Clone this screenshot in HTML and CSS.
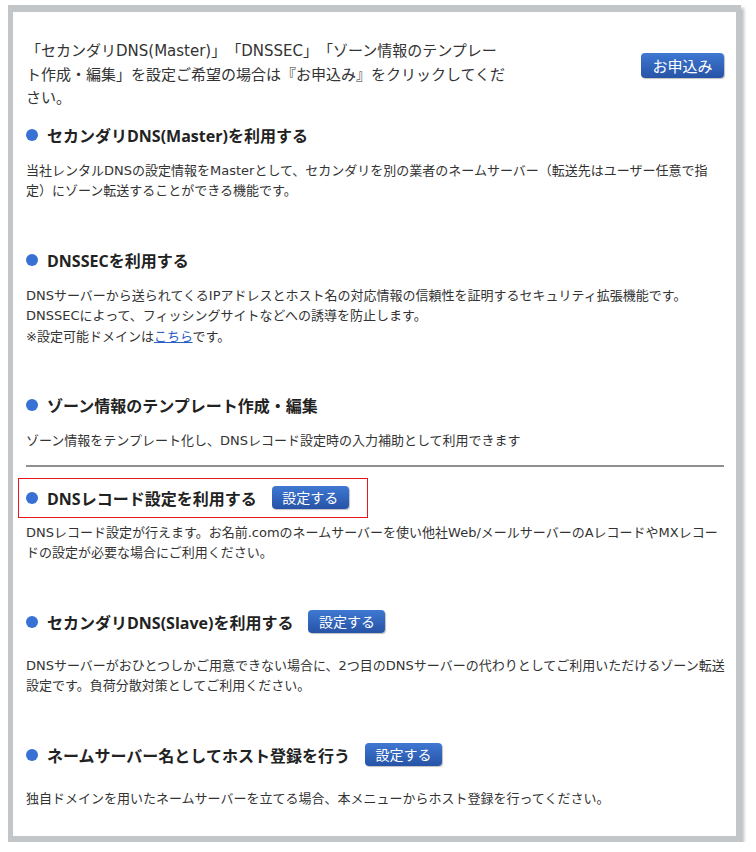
FILE: index.html
```html
<!DOCTYPE html>
<html lang="ja">
<head>
    <meta charset="UTF-8">
    <meta name="viewport" content="width=device-width, initial-scale=1.0">
    <link rel="stylesheet" href="styles.css">
    <title>DNS関連機能設定</title>
</head>
<body>
    <div class="frame">

        <div class="intro">
            <p class="intro-text">「セカンダリDNS(Master)」「DNSSEC」「ゾーン情報のテンプレー<br>ト作成・編集」を設定ご希望の場合は『お申込み』をクリックしてください。</p>
            <a href="#" class="btn btn-apply">お申込み</a>
        </div>

        <div class="section">
            <h2 class="section-title"><span class="dot"></span>セカンダリDNS(Master)を利用する</h2>
            <p class="section-text">当社レンタルDNSの設定情報をMasterとして、セカンダリを別の業者のネームサーバー（転送先はユーザー任意で指定）にゾーン転送することができる機能です。</p>
        </div>

        <div class="section">
            <h2 class="section-title"><span class="dot"></span>DNSSECを利用する</h2>
            <p class="section-text">DNSサーバーから送られてくるIPアドレスとホスト名の対応情報の信頼性を証明するセキュリティ拡張機能です。<br>DNSSECによって、フィッシングサイトなどへの誘導を防止します。<br>※設定可能ドメインは<a href="#" class="link">こちら</a>です。</p>
        </div>

        <div class="section section-last">
            <h2 class="section-title"><span class="dot"></span>ゾーン情報のテンプレート作成・編集</h2>
            <p class="section-text">ゾーン情報をテンプレート化し、DNSレコード設定時の入力補助として利用できます</p>
        </div>

        <hr class="divider">

        <div class="section">
            <h2 class="section-title marked"><span class="dot"></span>DNSレコード設定を利用する<a href="#" class="btn">設定する</a></h2>
            <p class="section-text">DNSレコード設定が行えます。お名前.comのネームサーバーを使い他社Web/メールサーバーのAレコードやMXレコードの設定が必要な場合にご利用ください。</p>
        </div>

        <div class="section">
            <h2 class="section-title has-btn"><span class="dot"></span>セカンダリDNS(Slave)を利用する<a href="#" class="btn">設定する</a></h2>
            <p class="section-text">DNSサーバーがおひとつしかご用意できない場合に、2つ目のDNSサーバーの代わりとしてご利用いただけるゾーン転送設定です。負荷分散対策としてご利用ください。</p>
        </div>

        <div class="section section-end">
            <h2 class="section-title has-btn"><span class="dot"></span>ネームサーバー名としてホスト登録を行う<a href="#" class="btn">設定する</a></h2>
            <p class="section-text">独自ドメインを用いたネームサーバーを立てる場合、本メニューからホスト登録を行ってください。</p>
        </div>

    </div>
</body>
</html>
```

FILE: styles.css
```css
*{
    box-sizing: border-box;
}

body{
    margin: 0;
    background-color: #fff;
    font-family: "Open Sans", "Noto Sans CJK JP", sans-serif;
    color: #333;
    text-spacing-trim: space-all;
}

.frame{
    width: 733px;
    margin: 5px 0 0 8px;
    padding: 28px 12px 27px 13px;
    background-color: #fff;
    border: 5px solid #c3c6c9;
    border-top-width: 7px;
    border-bottom-width: 6px;
    box-shadow: 3px 3px 3px rgba(0, 0, 0, 0.25);
}

.intro{
    display: flex;
    justify-content: space-between;
    align-items: flex-start;
    margin-bottom: 12px;
}

.intro-text{
    width: 492px;
    margin: 0;
    font-size: 15px;
    line-height: 23.5px;
    font-family: "DejaVu Sans", "Noto Sans CJK JP", sans-serif;
    color: #333;
}

.btn{
    display: inline-block;
    width: 77px;
    height: 23px;
    line-height: 23px;
    text-align: center;
    font-family: "Noto Sans CJK JP", sans-serif;
    font-size: 14px;
    font-weight: normal;
    color: #fff;
    text-decoration: none;
    border-radius: 4px;
    background: linear-gradient(#3f78d2, #2653a6);
    box-shadow: 1px 1px 1px rgba(0, 0, 0, 0.25);
}

.btn-apply{
    width: 83px;
    height: 25px;
    line-height: 25px;
    font-size: 15px;
    margin-top: 13px;
}

.section{
    padding-bottom: 46px;
}

.section-last{
    padding-bottom: 13px;
}

.section-end{
    padding-bottom: 0;
}

.section-title{
    display: flex;
    align-items: center;
    height: 24px;
    margin: 0 0 14px;
    font-size: 16px;
    font-weight: bold;
    color: #222;
}

.section-title .btn{
    margin-left: 15px;
}

.has-btn{
    margin-bottom: 22px;
}

.dot{
    width: 12px;
    height: 12px;
    margin-right: 9px;
    border-radius: 50%;
    background-color: #3871d4;
}

.marked{
    display: inline-flex;
    height: 40px;
    margin: 0 0 5px -8px;
    padding: 0 18px 0 7px;
    border: 1px solid #e8161b;
}

.section-text{
    margin: 0 -6px 0 0;
    font-family: "DejaVu Sans", "Noto Sans CJK JP", sans-serif;
    font-size: 13px;
    line-height: 20.5px;
    color: #333;
}

.link{
    color: #2a62c4;
}

.divider{
    height: 2px;
    margin: 0 0 11px;
    border: none;
    background-color: #8d8f91;
}
```
